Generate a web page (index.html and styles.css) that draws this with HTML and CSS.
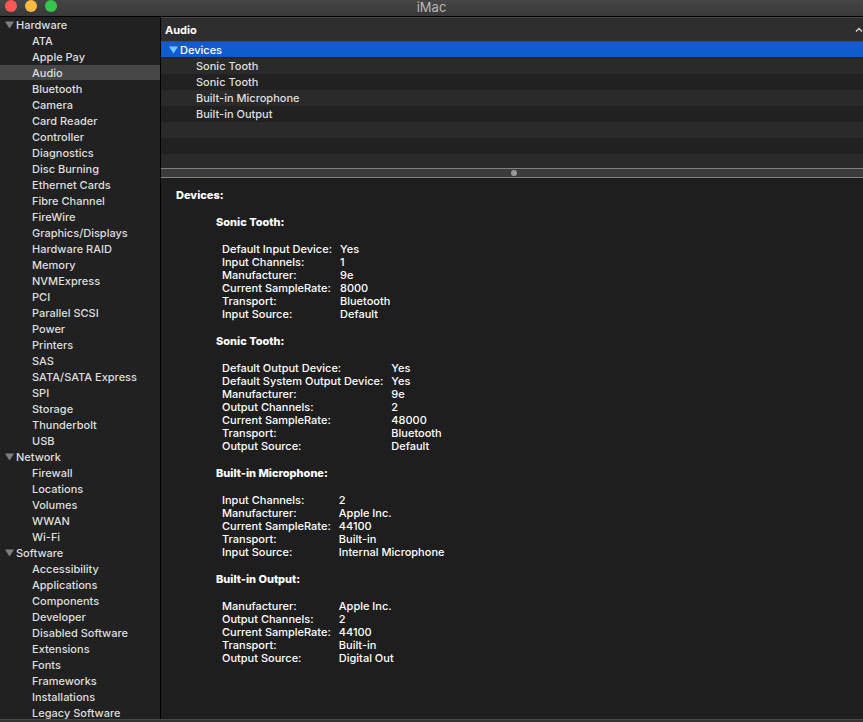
FILE: index.html
```html
<!DOCTYPE html>
<html lang="en">
<head>
<meta charset="utf-8">
<title>iMac</title>
<link rel="stylesheet" href="styles.css">
</head>
<body>
<div class="window">
  <header class="titlebar">
    <div class="lights">
      <button class="light close" type="button" aria-label="Close"></button>
      <button class="light minimize" type="button" aria-label="Minimize"></button>
      <button class="light maximize" type="button" aria-label="Zoom"></button>
    </div>
    <h1 class="title">iMac</h1>
  </header>
  <div class="body">
    <nav class="sidebar" aria-label="Categories">
      <button class="group" type="button"><svg class="arrow" viewBox="0 0 9 8"><path d="M0 0.5h9L4.500 7.500z"/></svg>Hardware</button>
      <a class="item" href="#">ATA</a>
      <a class="item" href="#">Apple Pay</a>
      <a class="item selected" href="#" aria-current="page">Audio</a>
      <a class="item" href="#">Bluetooth</a>
      <a class="item" href="#">Camera</a>
      <a class="item" href="#">Card Reader</a>
      <a class="item" href="#">Controller</a>
      <a class="item" href="#">Diagnostics</a>
      <a class="item" href="#">Disc Burning</a>
      <a class="item" href="#">Ethernet Cards</a>
      <a class="item" href="#">Fibre Channel</a>
      <a class="item" href="#">FireWire</a>
      <a class="item" href="#">Graphics/Displays</a>
      <a class="item" href="#">Hardware RAID</a>
      <a class="item" href="#">Memory</a>
      <a class="item" href="#">NVMExpress</a>
      <a class="item" href="#">PCI</a>
      <a class="item" href="#">Parallel SCSI</a>
      <a class="item" href="#">Power</a>
      <a class="item" href="#">Printers</a>
      <a class="item" href="#">SAS</a>
      <a class="item" href="#">SATA/SATA Express</a>
      <a class="item" href="#">SPI</a>
      <a class="item" href="#">Storage</a>
      <a class="item" href="#">Thunderbolt</a>
      <a class="item" href="#">USB</a>
      <button class="group" type="button"><svg class="arrow" viewBox="0 0 9 8"><path d="M0 0.5h9L4.500 7.500z"/></svg>Network</button>
      <a class="item" href="#">Firewall</a>
      <a class="item" href="#">Locations</a>
      <a class="item" href="#">Volumes</a>
      <a class="item" href="#">WWAN</a>
      <a class="item" href="#">Wi-Fi</a>
      <button class="group" type="button"><svg class="arrow" viewBox="0 0 9 8"><path d="M0 0.5h9L4.500 7.500z"/></svg>Software</button>
      <a class="item" href="#">Accessibility</a>
      <a class="item" href="#">Applications</a>
      <a class="item" href="#">Components</a>
      <a class="item" href="#">Developer</a>
      <a class="item" href="#">Disabled Software</a>
      <a class="item" href="#">Extensions</a>
      <a class="item" href="#">Fonts</a>
      <a class="item" href="#">Frameworks</a>
      <a class="item" href="#">Installations</a>
      <a class="item" href="#">Legacy Software</a>
    </nav>
    <main class="main">
      <table class="outline">
        <thead>
          <tr><th><button class="sort" type="button">Audio<svg class="chevron" viewBox="0 0 8 5"><path d="M1 4.500L4 1.500L7 4.500"/></svg></button></th></tr>
        </thead>
        <tbody>
          <tr class="active"><td><button class="disclose" type="button"><svg class="arrow" viewBox="0 0 9 8"><path d="M0 0.5h9L4.500 7.500z"/></svg>Devices</button></td></tr>
          <tr><td>Sonic Tooth</td></tr>
          <tr><td>Sonic Tooth</td></tr>
          <tr><td>Built-in Microphone</td></tr>
          <tr><td>Built-in Output</td></tr>
          <tr><td></td></tr>
          <tr><td></td></tr>
          <tr class="last"><td></td></tr>
        </tbody>
      </table>
      <div class="splitter" role="separator"><span class="grip"></span></div>
      <section class="details">
        <h2>Devices:</h2>
        <section class="device">
          <h3>Sonic Tooth:</h3>
          <table class="facts">
            <tr><th>Default Input Device:</th><td>Yes</td></tr>
            <tr><th>Input Channels:</th><td>1</td></tr>
            <tr><th>Manufacturer:</th><td>9e</td></tr>
            <tr><th>Current SampleRate:</th><td>8000</td></tr>
            <tr><th>Transport:</th><td>Bluetooth</td></tr>
            <tr><th>Input Source:</th><td>Default</td></tr>
          </table>
        </section>
        <section class="device">
          <h3>Sonic Tooth:</h3>
          <table class="facts">
            <tr><th>Default Output Device:</th><td>Yes</td></tr>
            <tr><th>Default System Output Device:</th><td>Yes</td></tr>
            <tr><th>Manufacturer:</th><td>9e</td></tr>
            <tr><th>Output Channels:</th><td>2</td></tr>
            <tr><th>Current SampleRate:</th><td>48000</td></tr>
            <tr><th>Transport:</th><td>Bluetooth</td></tr>
            <tr><th>Output Source:</th><td>Default</td></tr>
          </table>
        </section>
        <section class="device">
          <h3>Built-in Microphone:</h3>
          <table class="facts">
            <tr><th>Input Channels:</th><td>2</td></tr>
            <tr><th>Manufacturer:</th><td>Apple Inc.</td></tr>
            <tr><th>Current SampleRate:</th><td>44100</td></tr>
            <tr><th>Transport:</th><td>Built-in</td></tr>
            <tr><th>Input Source:</th><td>Internal Microphone</td></tr>
          </table>
        </section>
        <section class="device">
          <h3>Built-in Output:</h3>
          <table class="facts">
            <tr><th>Manufacturer:</th><td>Apple Inc.</td></tr>
            <tr><th>Output Channels:</th><td>2</td></tr>
            <tr><th>Current SampleRate:</th><td>44100</td></tr>
            <tr><th>Transport:</th><td>Built-in</td></tr>
            <tr><th>Output Source:</th><td>Digital Out</td></tr>
          </table>
        </section>
      </section>
    </main>
  </div>
  <footer class="statusbar"></footer>
</div>
</body>
</html>
```
FILE: styles.css
```css
* { box-sizing: border-box; margin: 0; padding: 0; }

body {
  background: #1e1e1e;
  color: #dfdfdf;
  font: 500 11px/16px Inter, "Liberation Sans", sans-serif;
  overflow: hidden;
}

button { border: 0; background: none; color: inherit; font: inherit; text-align: left; }
a { color: inherit; text-decoration: none; }
svg { display: block; flex: none; }

.window { display: flex; flex-direction: column; height: 100vh; }

/* Title bar */
.titlebar {
  display: grid;
  grid-template-columns: 1fr auto 1fr;
  flex: none;
  height: 17px;
  padding: 0 5px;
  background: linear-gradient(#454545, #393939);
  border-bottom: 1px solid #000;
}
.lights { display: flex; gap: 8px; }
.light { width: 12px; height: 12px; border-radius: 50%; }
.close { background: #fc5753; }
.minimize { background: #fdbc40; }
.maximize { background: #34c84a; }
.title { font-size: 13px; font-weight: 400; line-height: 15px; color: #b8b8b8; }

.body { display: flex; flex: 1; min-height: 0; }

/* Category list */
.sidebar {
  flex: none;
  width: 161px;
  overflow: hidden;
  background: #212121;
  border-right: 1px solid #000;
}
.group { display: flex; align-items: center; gap: 2px; width: 100%; height: 16px; padding-left: 5px; }
.arrow { width: 9px; height: 8px; fill: #808080; }
.item { display: block; height: 16px; padding-left: 32px; }
.selected { background: #464646; border-bottom: 1px solid #212121; }

/* The pane runs slightly past the window edge */
.main { flex: 1; min-width: 0; margin-right: -4px; }

.outline { width: 100%; border-spacing: 0; }
.outline th { height: 25px; background: #2e2e2e; border-top: 1px solid #484848; border-bottom: 1px solid #484848; }
.sort {
  display: flex;
  align-items: center;
  justify-content: space-between;
  width: 100%;
  padding: 0 4px;
  color: #fff;
  font-weight: 700;
}
.chevron { width: 8px; height: 5px; fill: none; stroke: #d0d0d0; stroke-width: 1.5; }
.outline td { height: 16px; padding-left: 35px; }
.outline tbody tr:nth-child(even) { background: #2a2a2a; }
.outline tbody tr:nth-child(odd) { background: #212121; }
.outline tbody tr.active { background: #0f5ccf; color: #fff; }
.outline .active td { padding-left: 8px; box-shadow: inset 0 -1px #212121; }
.disclose { display: flex; align-items: center; gap: 2px; height: 16px; }
.disclose .arrow { fill: #6fc8ff; }
.outline .last td { height: 14px; }

.splitter {
  display: flex;
  align-items: center;
  justify-content: center;
  height: 10px;
  background: #3b3b3b;
  border-top: 1px solid #808080;
  border-bottom: 1px solid #808080;
}
.grip { width: 6px; height: 6px; border-radius: 50%; background: #999; }

/* Report */
.details { padding: 11px 15px; color: #fff; line-height: 13px; }
h2, h3 { font-size: 11px; font-weight: 800; }
.device { margin: 14px 0 0 40px; }
.facts { margin: 14px 0 0 6px; border-spacing: 0; }
.facts th { padding-right: 8px; font-weight: 500; text-align: left; white-space: nowrap; }

.statusbar { flex: none; height: 3px; background: #343434; border-top: 1px solid #484848; }
```
